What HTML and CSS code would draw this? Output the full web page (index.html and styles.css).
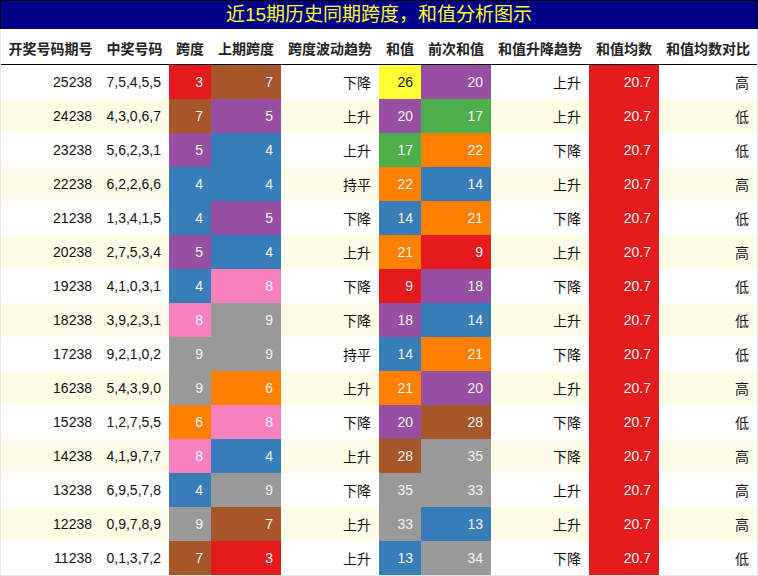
FILE: index.html
```html
<!DOCTYPE html>
<html lang="zh">
<head>
<meta charset="utf-8">
<title>近15期历史同期跨度，和值分析图示</title>
<link rel="stylesheet" href="styles.css">
</head>
<body>
<div class="chart">
  <div class="title">近15期历史同期跨度，和值分析图示</div>
  <div class="row head">
    <div>开奖号码期号</div><div>中奖号码</div><div>跨度</div><div>上期跨度</div><div>跨度波动趋势</div><div>和值</div><div>前次和值</div><div>和值升降趋势</div><div>和值均数</div><div>和值均数对比</div>
  </div>
  <div class="row"><div>25238</div><div>7,5,4,5,5</div><div class="c red">3</div><div class="c brown">7</div><div>下降</div><div class="c yellow">26</div><div class="c purple">20</div><div>上升</div><div class="c red">20.7</div><div>高</div></div>
  <div class="row alt"><div>24238</div><div>4,3,0,6,7</div><div class="c brown">7</div><div class="c purple">5</div><div>上升</div><div class="c purple">20</div><div class="c green">17</div><div>上升</div><div class="c red">20.7</div><div>低</div></div>
  <div class="row"><div>23238</div><div>5,6,2,3,1</div><div class="c purple">5</div><div class="c blue">4</div><div>上升</div><div class="c green">17</div><div class="c orange">22</div><div>下降</div><div class="c red">20.7</div><div>低</div></div>
  <div class="row alt"><div>22238</div><div>6,2,2,6,6</div><div class="c blue">4</div><div class="c blue">4</div><div>持平</div><div class="c orange">22</div><div class="c blue">14</div><div>上升</div><div class="c red">20.7</div><div>高</div></div>
  <div class="row"><div>21238</div><div>1,3,4,1,5</div><div class="c blue">4</div><div class="c purple">5</div><div>下降</div><div class="c blue">14</div><div class="c orange">21</div><div>下降</div><div class="c red">20.7</div><div>低</div></div>
  <div class="row alt"><div>20238</div><div>2,7,5,3,4</div><div class="c purple">5</div><div class="c blue">4</div><div>上升</div><div class="c orange">21</div><div class="c red">9</div><div>上升</div><div class="c red">20.7</div><div>高</div></div>
  <div class="row"><div>19238</div><div>4,1,0,3,1</div><div class="c blue">4</div><div class="c pink">8</div><div>下降</div><div class="c red">9</div><div class="c purple">18</div><div>下降</div><div class="c red">20.7</div><div>低</div></div>
  <div class="row alt"><div>18238</div><div>3,9,2,3,1</div><div class="c pink">8</div><div class="c gray">9</div><div>下降</div><div class="c purple">18</div><div class="c blue">14</div><div>上升</div><div class="c red">20.7</div><div>低</div></div>
  <div class="row"><div>17238</div><div>9,2,1,0,2</div><div class="c gray">9</div><div class="c gray">9</div><div>持平</div><div class="c blue">14</div><div class="c orange">21</div><div>下降</div><div class="c red">20.7</div><div>低</div></div>
  <div class="row alt"><div>16238</div><div>5,4,3,9,0</div><div class="c gray">9</div><div class="c orange">6</div><div>上升</div><div class="c orange">21</div><div class="c purple">20</div><div>上升</div><div class="c red">20.7</div><div>高</div></div>
  <div class="row"><div>15238</div><div>1,2,7,5,5</div><div class="c orange">6</div><div class="c pink">8</div><div>下降</div><div class="c purple">20</div><div class="c brown">28</div><div>下降</div><div class="c red">20.7</div><div>低</div></div>
  <div class="row alt"><div>14238</div><div>4,1,9,7,7</div><div class="c pink">8</div><div class="c blue">4</div><div>上升</div><div class="c brown">28</div><div class="c gray">35</div><div>下降</div><div class="c red">20.7</div><div>高</div></div>
  <div class="row"><div>13238</div><div>6,9,5,7,8</div><div class="c blue">4</div><div class="c gray">9</div><div>下降</div><div class="c gray">35</div><div class="c gray">33</div><div>上升</div><div class="c red">20.7</div><div>高</div></div>
  <div class="row alt"><div>12238</div><div>0,9,7,8,9</div><div class="c gray">9</div><div class="c brown">7</div><div>上升</div><div class="c gray">33</div><div class="c blue">13</div><div>上升</div><div class="c red">20.7</div><div>高</div></div>
  <div class="row"><div>11238</div><div>0,1,3,7,2</div><div class="c brown">7</div><div class="c red">3</div><div>上升</div><div class="c blue">13</div><div class="c gray">34</div><div>下降</div><div class="c red">20.7</div><div>低</div></div>
</div>
</body>
</html>
```
FILE: styles.css
```css
html, body {
  margin: 0;
  padding: 0;
  background: #ffffff;
}
body {
  font-family: "Liberation Sans", "Noto Sans CJK SC", sans-serif;
  color: #111;
}
.chart {
  width: 758px;
  box-sizing: border-box;
  border-left: 1px solid #e6e6e6;
  border-right: 1px solid #e6e6e6;
  border-bottom: 1px solid #e6e6e6;
}
.title {
  height: 28px;
  line-height: 28px;
  margin-left: -1px;
  margin-right: -1px;
  background: #000088;
  border: 1px solid #000;
  border-bottom: none;
  color: #ffff22;
  font-size: 19px;
  text-align: center;
}
.row {
  display: grid;
  grid-template-columns: 99px 69px 42px 70px 98px 42px 70px 98px 70px 98px;
  height: 34px;
  align-items: stretch;
  font-size: 14px;
}
.row > div {
  display: flex;
  align-items: center;
  justify-content: flex-end;
  padding-right: 8px;
}
.row.head {
  height: 35px;
  border-bottom: 1px solid #000;
  font-weight: bold;
  color: #222;
}
.row.head > div {
  justify-content: center;
  padding: 3px 0 0 0;
}
.row.alt {
  background: #fffce8;
}
.c {
  color: #f4f4f4;
}
.red { background: #e41a1c; }
.brown { background: #a65628; }
.purple { background: #984ea3; }
.blue { background: #377eb8; }
.green { background: #4daf4a; }
.orange { background: #ff7f00; }
.yellow { background: #ffff33; color: #111; }
.pink { background: #f781bf; }
.gray { background: #999999; }
```
